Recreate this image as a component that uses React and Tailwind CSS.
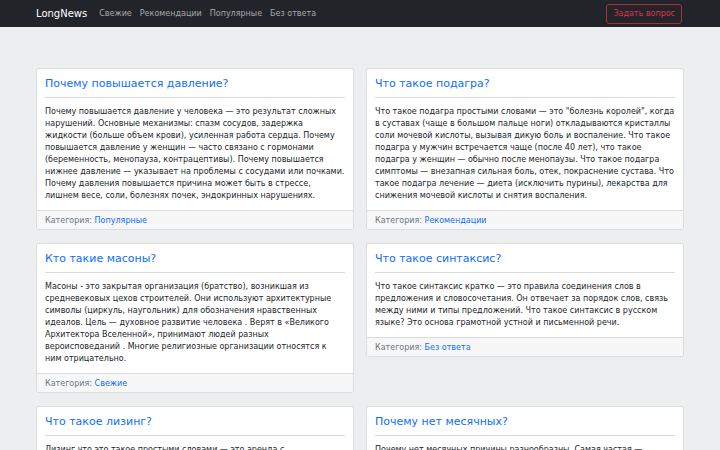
import React from "react";

const navLinks = ["Свежие", "Рекомендации", "Популярные", "Без ответа"];

const posts = [
    {
        title: "Почему повышается давление?",
        text: "Почему повышается давление у человека — это результат сложных нарушений. Основные механизмы: спазм сосудов, задержка жидкости (больше объем крови), усиленная работа сердца. Почему повышается давление у женщин — часто связано с гормонами (беременность, менопауза, контрацептивы). Почему повышается нижнее давление — указывает на проблемы с сосудами или почками. Почему давления повышается причина может быть в стрессе, лишнем весе, соли, болезнях почек, эндокринных нарушениях.",
        category: "Популярные",
    },
    {
        title: "Что такое подагра?",
        text: "Что такое подагра простыми словами — это \"болезнь королей\", когда в суставах (чаще в большом пальце ноги) откладываются кристаллы соли мочевой кислоты, вызывая дикую боль и воспаление. Что такое подагра у мужчин встречается чаще (после 40 лет), что такое подагра у женщин — обычно после менопаузы. Что такое подагра симптомы — внезапная сильная боль, отек, покраснение сустава. Что такое подагра лечение — диета (исключить пурины), лекарства для снижения мочевой кислоты и снятия воспаления.",
        category: "Рекомендации",
    },
    {
        title: "Кто такие масоны?",
        text: "Масоны - это закрытая организация (братство), возникшая из средневековых цехов строителей. Они используют архитектурные символы (циркуль, наугольник) для обозначения нравственных идеалов. Цель — духовное развитие человека . Верят в «Великого Архитектора Вселенной», принимают людей разных вероисповеданий . Многие религиозные организации относятся к ним отрицательно.",
        category: "Свежие",
    },
    {
        title: "Что такое синтаксис?",
        text: "Что такое синтаксис кратко — это правила соединения слов в предложения и словосочетания. Он отвечает за порядок слов, связь между ними и типы предложений. Что такое синтаксис в русском языке? Это основа грамотной устной и письменной речи.",
        category: "Без ответа",
    },
    {
        title: "Что такое лизинг?",
        text: "Лизинг что это такое простыми словами — это аренда с последующим выкупом имущества. Компания покупает технику или автомобиль и передает его вам в пользование за ежемесячные платежи.",
        category: "Популярные",
    },
    {
        title: "Почему нет месячных?",
        text: "Почему нет месячных причины разнообразны. Самая частая — беременность, но также стресс, резкая потеря веса, гормональные нарушения и интенсивные тренировки.",
        category: "Свежие",
    },
];

const PostCard = ({ post }) => (
    <div className="bg-white border border-[#dcdddf] rounded-[3px] overflow-hidden">
        <div className="px-[8px] pt-[8px] pb-[8px]">
            <h4 className="text-[11px] leading-[13px] text-[#0d6efd]">{post.title}</h4>
            <hr className="mt-[7px] mb-[8px] border-0 border-t border-[#d9dadb]" />
            <p className="text-[8px] leading-[12px] text-[#212529]">{post.text}</p>
        </div>
        <div className="bg-[#f7f7f8] border-t border-[#dcdddf] px-[8px] pt-[4px] pb-[2px] text-[8px] leading-[12px]">
            <span className="text-[#6c757d]">Категория: </span>
            <a className="text-[#0d6efd]">{post.category}</a>
        </div>
    </div>
);

export default function App() {
    return (
        <div
            className="h-[450px] overflow-hidden bg-[#eceef0]"
            style={{ fontFamily: "'DejaVu Sans', sans-serif" }}
        >
            <nav className="bg-[#212529] h-[27px]">
                <div className="w-[660px] mx-auto px-[6px] h-full flex items-center">
                    <span className="text-white text-[10px] mr-[8px]">LongNews</span>
                    <ul className="flex items-center">
                        {navLinks.map((link) => (
                            <li key={link} className="px-[4px] text-[8px] text-[#a6a8aa]">
                                {link}
                            </li>
                        ))}
                    </ul>
                    <button className="ml-auto mr-[2px] border border-[#b02a37] text-[#dc3545] text-[8px] leading-[12px] rounded-[3px] px-[6px] py-[3px]">
                        Задать вопрос
                    </button>
                </div>
            </nav>

            <main className="w-[660px] mx-auto px-[6px] pt-[41px]">
                <div className="grid grid-cols-2 gap-x-[12px] gap-y-[13px] items-start">
                    {posts.map((post) => (
                        <PostCard key={post.title} post={post} />
                    ))}
                </div>
            </main>
        </div>
    );
}
